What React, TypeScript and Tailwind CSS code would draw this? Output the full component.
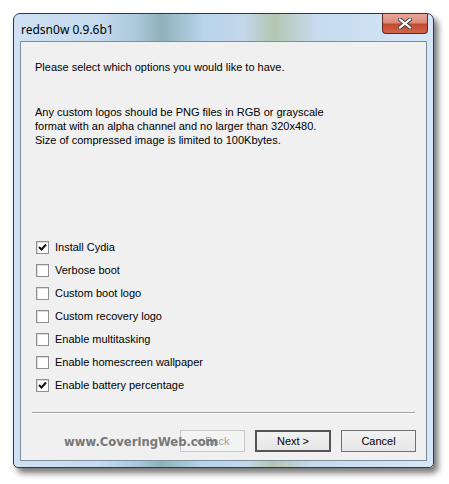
import React from "react";

const font = { fontFamily: "'Liberation Sans', Arial, sans-serif" };

function Check({ checked, label }: { checked: boolean; label: string }) {
  return (
    <div className="flex items-center h-[23px]">
      <div className="w-[13px] h-[13px] border border-[#8f8f8f] bg-white flex items-center justify-center shadow-[inset_1px_1px_0_#dcdcdc]">
        {checked && (
          <svg width="9" height="9" viewBox="0 0 9 9">
            <path d="M1 4 L3.5 6.5 L8 1.5" stroke="#111" strokeWidth="2" fill="none" />
          </svg>
        )}
      </div>
      <span className="ml-[6px] text-[11px] text-black leading-none">{label}</span>
    </div>
  );
}

export default function App() {
  const opts: [boolean, string][] = [
    [true, "Install Cydia"],
    [false, "Verbose boot"],
    [false, "Custom boot logo"],
    [false, "Custom recovery logo"],
    [false, "Enable multitasking"],
    [false, "Enable homescreen wallpaper"],
    [true, "Enable battery percentage"],
  ];
  return (
    <div className="w-[449px] h-[484px] bg-white pt-[13px] pl-[13px]" style={font}>
      <div className="w-[421px] h-[455px] rounded-t-[7px] rounded-b-[5px] border border-[#2a3a4a] shadow-[4px_5px_6px_rgba(0,0,0,0.55)] flex flex-col px-[6px] pb-[6px] bg-[linear-gradient(90deg,#cfe1f3_0%,#c6dbef_20%,#a9c6d8_30%,#8fb1b9_35%,#b8d3ea_45%,#c3d8ea_55%,#b4c6b2_62%,#c6dbef_72%,#d6e7f7_100%)]">
        <div className="h-[27px] flex items-start relative">
          <span className="text-[12px] text-black mt-[7px] ml-[1px]" style={{ fontFamily: "'Noto Sans', 'DejaVu Sans', sans-serif", fontSize: "12px" }}>
            redsn0w 0.9.6b1
          </span>
          <div className="absolute right-[-1px] top-0 w-[46px] h-[20px] rounded-b-[4px] border border-[#5a2a22] border-t-0 bg-[linear-gradient(180deg,#e9a99c_0%,#d98a7a_45%,#c44a30_55%,#d0644a_100%)] flex items-center justify-center">
            <svg width="14" height="11" viewBox="0 0 14 11">
              <path d="M2 1.5 L12 9.5 M12 1.5 L2 9.5" stroke="#3a3a3a" strokeWidth="4" strokeLinecap="square" />
              <path d="M2 1.5 L12 9.5 M12 1.5 L2 9.5" stroke="#ffffff" strokeWidth="2.2" strokeLinecap="square" />
            </svg>
          </div>
        </div>
        <div className="flex-1 border border-[#7b8c9c] bg-[#f0f0f0] flex flex-col">
          <div className="pl-[14px] pt-[18px] text-[11px] text-black leading-[14px]">
            Please select which options you would like to have.
          </div>
          <div className="pl-[14px] pt-[31px] text-[11px] text-black leading-[14px]">
            <div>Any custom logos should be PNG files in RGB or grayscale</div>
            <div>format with an alpha channel and no larger than 320x480.</div>
            <div>Size of compressed image is limited to 100Kbytes.</div>
          </div>
          <div className="pl-[15px] pt-[89px] flex flex-col">
            {opts.map(([c, l]) => (
              <Check key={l} checked={c} label={l} />
            ))}
          </div>
          <div className="mx-[11px] mt-[15px] h-[2px] border-t border-[#a0a0a0] border-b border-b-white" />
          <div className="relative flex items-center justify-end pr-[10px] pt-[16px] gap-[10px]">
            <span className="absolute left-[43px] top-[20px] text-[11.6px] font-bold text-[#777]" style={{ fontFamily: "'DejaVu Sans', Verdana, sans-serif" }}>
              www.CoveringWeb.com
            </span>
            <div className="w-[65px] h-[22px] border border-[#c8c8c8] bg-[#f4f4f4] flex items-center justify-center text-[11px] text-[#a0a0a0]">
              &lt; Back
            </div>
            <div className="w-[76px] h-[22px] border-2 border-[#555] bg-[linear-gradient(180deg,#f2f2f2,#e6e6e6)] flex items-center justify-center text-[11px] text-black">
              Next &gt;
            </div>
            <div className="w-[75px] h-[22px] border border-[#707070] bg-[linear-gradient(180deg,#f2f2f2,#e6e6e6)] flex items-center justify-center text-[11px] text-black">
              Cancel
            </div>
          </div>
        </div>
      </div>
    </div>
  );
}
